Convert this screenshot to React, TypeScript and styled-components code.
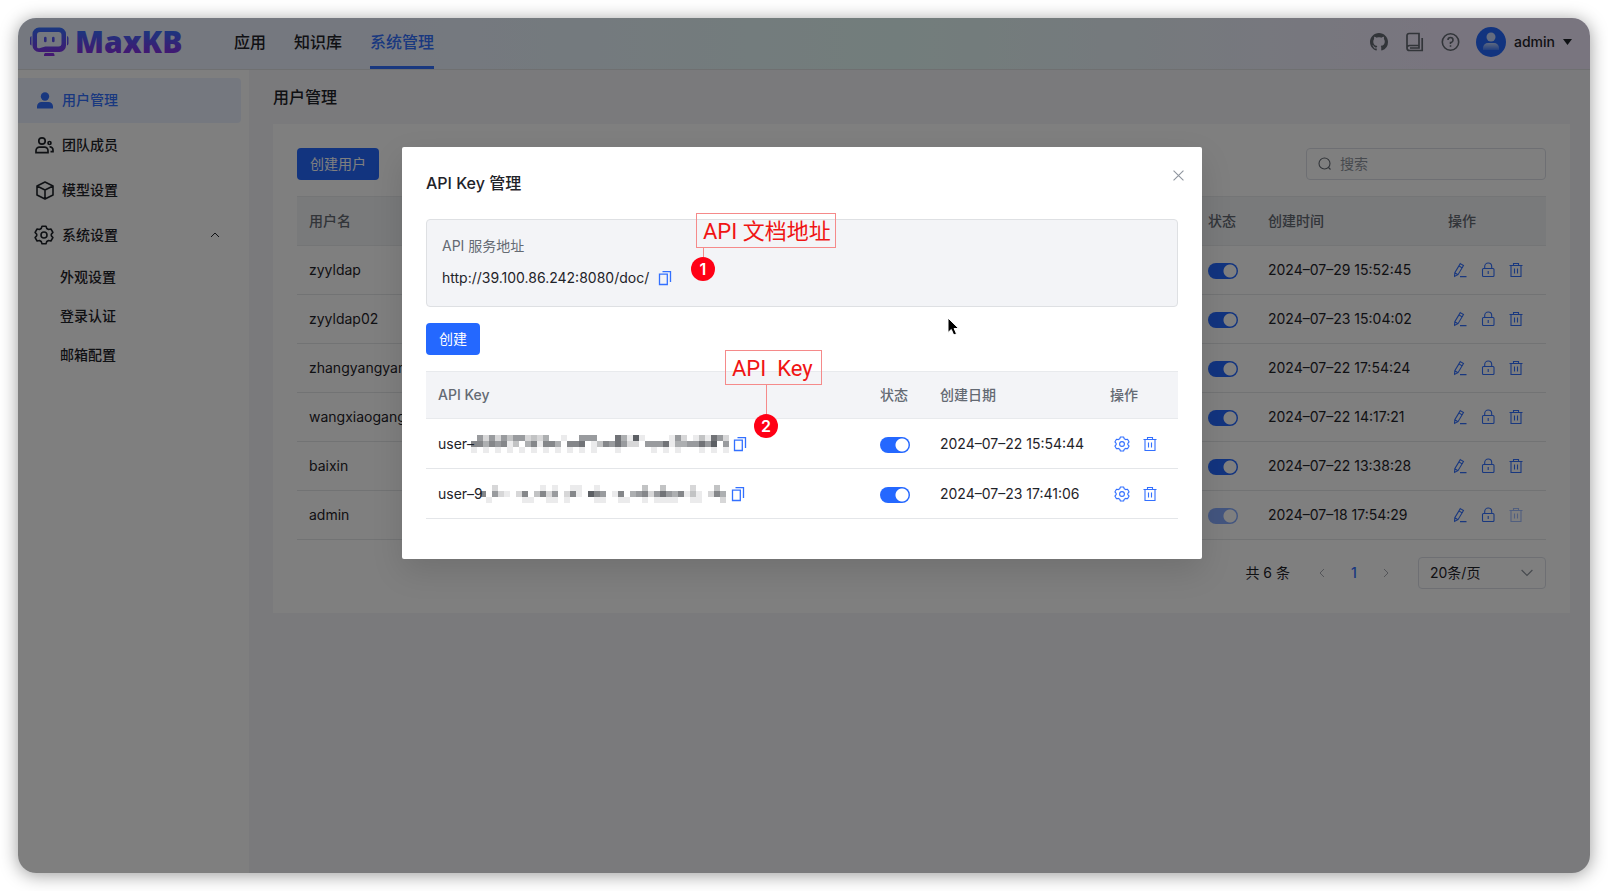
import React from 'react';
import styled, { createGlobalStyle, css } from 'styled-components';

const Global = createGlobalStyle`
  *, *::before, *::after { box-sizing: border-box; }
  body { margin: 0; background: #fff; }
  body, button, input, select {
    font-family: Inter, 'Noto Sans CJK SC', sans-serif;
    font-size: 14px;
    line-height: 22px;
    color: #1f2329;
  }
  button { padding: 0; border: 0; background: none; cursor: pointer; }
  h1, h2, p { margin: 0; }
  a { color: inherit; text-decoration: none; }
  svg { display: block; flex: none; }
`;

const Page = styled.div`
  min-height: 100vh;
  padding: 18px;
  display: flex;
`;

const Frame = styled.div`
  position: relative;
  flex: 1;
  display: flex;
  flex-direction: column;
  border-radius: 18px;
  overflow: hidden;
  background: #f4f5f8;
  box-shadow: 0 2px 18px rgba(0, 0, 0, 0.4);
`;

const Header = styled.header`
  display: flex;
  align-items: center;
  height: 52px;
  padding: 0 18px 0 12px;
  border-bottom: 1px solid #dee0e3;
  background: linear-gradient(90deg, #ebf1ff 24%, #e5fbf8 56%, #f2ebfe 90%);
`;

const Brand = styled.a`
  display: flex;
  width: 204px;
`;

const Nav = styled.nav`
  flex: 1;
  align-self: stretch;
  display: flex;
  gap: 28px;
`;

const NavLink = styled.a<{ $active?: boolean }>`
  display: flex;
  align-items: center;
  font-size: 16px;
  font-weight: 500;
  border-bottom: 3px solid transparent;
  ${(p) => p.$active && css`
    color: #3370ff;
    border-color: #3370ff;
  `}
`;

const HeaderTools = styled.div`
  display: flex;
  align-items: center;
  gap: 16px;
  margin-bottom: 4px;
  color: #646a73;
`;

const IconButton = styled.button`
  display: inline-flex;
  align-items: center;
  justify-content: center;
  color: inherit;
`;

const UserMenu = styled.button`
  display: flex;
  align-items: center;
  gap: 8px;
  font-weight: 500;
`;

const Body = styled.div`
  flex: 1;
  display: flex;
`;

const Sidebar = styled.aside`
  width: 231px;
  padding: 8px 8px 0 0;
  background: #fff;
`;

const SideLink = styled.a<{ $active?: boolean }>`
  display: flex;
  align-items: center;
  gap: 8px;
  height: 45px;
  padding: 0 21px 2px 16px;
  border-radius: 0 4px 4px 0;
  font-weight: 500;
  ${(p) => p.$active && css`
    color: #3370ff;
    background: #ebf1ff;
  `}
  & > span { flex: 1; }
`;

const SubLink = styled.a`
  display: flex;
  align-items: center;
  height: 39px;
  padding: 0 0 2px 42px;
  font-weight: 500;
`;

const Main = styled.main`
  flex: 1;
  padding: 15px 20px 0 24px;
`;

const PageTitle = styled.h1`
  font-size: 16px;
  line-height: 24px;
  font-weight: 500;
`;

const Card = styled.section`
  margin-top: 15px;
  padding: 24px;
  background: #fff;
`;

const Toolbar = styled.div`
  display: flex;
  justify-content: space-between;
  margin-bottom: 16px;
`;

const PrimaryButton = styled.button`
  height: 32px;
  padding: 0 13px 1px;
  border-radius: 4px;
  background: #2468ff;
  color: #fff;
`;

const SearchBox = styled.label`
  display: flex;
  align-items: center;
  gap: 8px;
  width: 240px;
  height: 32px;
  padding: 0 11px;
  border: 1px solid #dcdfe6;
  border-radius: 4px;
  color: #646a73;
  input {
    flex: 1;
    min-width: 0;
    border: 0;
    padding: 0;
    outline: 0;
    background: none;
  }
  input::placeholder { color: #8f959e; opacity: 1; }
`;

const Table = styled.table<{ $head: number; $row: number }>`
  width: 100%;
  border-collapse: separate;
  border-spacing: 0;
  table-layout: fixed;
  th {
    height: ${(p) => p.$head}px;
    padding: 0 12px 1px;
    text-align: left;
    font-weight: 500;
    color: #646a73;
    background: #f3f4f7;
    border-top: 1px solid #e8eaed;
    border-bottom: 1px solid #e8eaed;
  }
  td {
    height: ${(p) => p.$row}px;
    padding: 0 12px;
    border-bottom: 1px solid #e4e6e9;
    white-space: nowrap;
  }
`;

const Col = styled.col<{ $w?: number }>`
  width: ${(p) => (p.$w ? `${p.$w}px` : 'auto')};
`;

const Switch = styled.input`
  appearance: none;
  display: block;
  width: 30px;
  height: 16px;
  margin: 2px 0 0;
  border-radius: 8px;
  background: radial-gradient(circle at 22px 8px, #fff 6px, transparent 7px) #2468ff;
  &:disabled { opacity: 0.55; }
`;

const Actions = styled.div`
  display: flex;
  gap: 12px;
  padding-left: 4px;
  color: #3370ff;
  button:disabled { opacity: 0.45; }
`;

const Pager = styled.div`
  display: flex;
  align-items: center;
  justify-content: flex-end;
  margin-top: 17px;
`;

const Total = styled.span`
  margin-right: 16px;
`;

const PageButton = styled.button<{ $current?: boolean }>`
  display: flex;
  align-items: center;
  justify-content: center;
  width: 32px;
  height: 32px;
  font-weight: 500;
  color: ${(p) => (p.$current ? '#3370ff' : '#a8abb2')};
`;

const SizeBox = styled.div`
  display: flex;
  align-items: center;
  width: 128px;
  height: 32px;
  margin-left: 16px;
  padding-right: 12px;
  border: 1px solid #dcdfe6;
  border-radius: 4px;
  color: #8f959e;
  select {
    flex: 1;
    appearance: none;
    border: 0;
    padding: 0 0 0 11px;
    background: none;
  }
`;

const Overlay = styled.div`
  position: absolute;
  inset: 0;
  display: flex;
  justify-content: center;
  align-items: flex-start;
  padding: 129px 4px 0 0;
  background: rgba(0, 0, 0, 0.5);
`;

const Dialog = styled.section`
  position: relative;
  width: 800px;
  padding: 24px 24px 40px;
  border-radius: 2px;
  background: #fff;
  box-shadow: 0 12px 32px rgba(0, 0, 0, 0.12);
`;

const DialogHead = styled.div`
  display: flex;
  justify-content: space-between;
  h2 { font-size: 16px; line-height: 24px; font-weight: 500; }
`;

const CloseButton = styled(IconButton)`
  width: 16px;
  height: 16px;
  margin: -4px -8px 0 0;
  color: #8f959e;
`;

const AddressBox = styled.div`
  margin: 24px 0 16px;
  padding: 15px;
  height: 88px;
  border: 1px solid #dee0e3;
  border-radius: 4px;
  background: #f3f4f7;
`;

const AddressLabel = styled.p`
  color: #646a73;
  margin-bottom: 10px;
`;

const Inline = styled.div<{ $gap: number }>`
  display: flex;
  align-items: center;
  gap: ${(p) => p.$gap}px;
  color: #1f2329;
  button { color: #3370ff; }
`;

const KeyTable = styled(Table)`
  margin-top: 16px;
`;

const Note = styled.div<{ $x: number; $y: number; $w: number }>`
  position: absolute;
  left: ${(p) => p.$x}px;
  top: ${(p) => p.$y}px;
  width: ${(p) => p.$w}px;
  height: 35px;
  padding-left: 6px;
  border: 1px solid #f58a8a;
  font-family: Roboto, 'Noto Sans CJK SC', sans-serif;
  font-size: 22px;
  line-height: 35px;
  color: #f01414;
  white-space: pre;
`;

const Marker = styled.div<{ $x: number; $y: number; $stem: number }>`
  position: absolute;
  left: ${(p) => p.$x}px;
  top: ${(p) => p.$y}px;
  width: 24px;
  height: 24px;
  border-radius: 12px;
  background: #ff0015;
  color: #fff;
  font-size: 16px;
  font-weight: 600;
  line-height: 24px;
  text-align: center;
  &::before {
    content: '';
    position: absolute;
    left: 12px;
    bottom: 24px;
    height: ${(p) => p.$stem}px;
    border-left: 1px solid #f58a8a;
  }
`;

const Pointer = styled.svg`
  position: absolute;
  left: 545px;
  top: 170px;
`;

const MosaicSvg = styled.svg`
  margin-left: -3px;
`;

const Logo = () => (
  <svg width="164" height="46" viewBox="0 0 164 46" role="img" aria-label="MaxKB">
    <defs>
      <linearGradient id="brand" x1="0" y1="0" x2="0" y2="1">
        <stop offset="0" stopColor="#3370ff" />
        <stop offset="1" stopColor="#8a2be2" />
      </linearGradient>
      <linearGradient id="brandText" gradientUnits="userSpaceOnUse" x1="0" y1="8" x2="0" y2="34">
        <stop offset="0" stopColor="#3370ff" />
        <stop offset="1" stopColor="#8a2be2" />
      </linearGradient>
    </defs>
    <g transform="translate(0 5)">
      <path fill="url(#brand)" fillRule="evenodd" d="M9 1.500h20.500a6.500 6.500 0 0 1 6.500 6.500v11.500a6.500 6.500 0 0 1-6.500 6.500H9a6.500 6.500 0 0 1-6.500-6.500V8a6.500 6.500 0 0 1 6.500-6.500ZM10 6a3 3 0 0 0-3 3v11.500a1.800 1.800 0 0 0 2.300 1.700l6-1.700H28.500a3 3 0 0 0 3-3V9a3 3 0 0 0-3-3ZM0 12a2 2 0 0 1 1.500-2v9.500a2 2 0 0 1-1.500-2ZM37 10a2 2 0 0 1 1.500 2v5.500a2 2 0 0 1-1.500 2ZM15 27h8.500a3.500 3.500 0 0 1 1 3H14a3.500 3.500 0 0 1 1-3ZM14 12a1.300 1.300 0 0 1 2.600 0v3a1.300 1.300 0 0 1-2.600 0ZM22 12a1.300 1.300 0 0 1 2.600 0v3a1.300 1.300 0 0 1-2.600 0Z" />
    </g>
    <text x="45" y="32" fill="url(#brandText)" fontFamily="'Open Sans', sans-serif" fontWeight="800" fontSize="30">MaxKB</text>
  </svg>
);

const Github = () => (
  <svg width="18" height="18" viewBox="0 0 16 16" fill="currentColor">
    <path d="M8 0C3.580 0 0 3.580 0 8c0 3.540 2.290 6.530 5.470 7.590.4.070.55-.17.55-.38 0-.19-.01-.82-.01-1.490-2.010.37-2.530-.49-2.690-.94-.09-.23-.48-.94-.82-1.130-.28-.15-.68-.52-.01-.53.63-.01 1.080.58 1.230.82.72 1.210 1.870.87 2.330.66.070-.52.28-.87.51-1.070-1.780-.2-3.640-.89-3.640-3.950 0-.87.31-1.590.82-2.150-.08-.2-.36-1.020.08-2.120 0 0 .67-.21 2.200.82.64-.18 1.320-.27 2-.27s1.360.09 2 .27c1.530-1.040 2.200-.82 2.200-.82.44 1.100.16 1.920.08 2.120.51.56.82 1.270.82 2.150 0 3.070-1.870 3.750-3.650 3.950.29.25.54.73.54 1.480 0 1.070-.01 1.930-.01 2.200 0 .21.15.46.55.38A8.010 8.010 0 0 0 16 8c0-4.420-3.580-8-8-8Z" />
  </svg>
);

const Book = () => (
  <svg width="20" height="20" viewBox="0 0 20 20" fill="none" stroke="currentColor" strokeWidth="1.7">
    <path d="M15 13.500V1.500H5A2 2 0 0 0 3 3.500V16a2.500 2.500 0 0 0 2.500 2.500H18.200V6M3 16a2.500 2.500 0 0 1 2.500-2.500H15M6 16H15V13.500" />
  </svg>
);

const Help = () => (
  <svg width="20" height="20" viewBox="0 0 20 20" fill="none" stroke="currentColor" strokeWidth="1.6">
    <circle cx="10.500" cy="10" r="8.200" />
    <path d="M8 8A2.500 2.500 0 1 1 10.500 10.500V12M10.500 13.200v1.600" />
  </svg>
);

const Avatar = () => (
  <svg width="30" height="30" viewBox="0 0 30 30">
    <defs>
      <linearGradient id="bust" x1="0" y1="0" x2="0" y2="1">
        <stop offset="0" stopColor="#fff" stopOpacity="0.7" />
        <stop offset="1" stopColor="#fff" stopOpacity="0.15" />
      </linearGradient>
    </defs>
    <circle cx="15" cy="15" r="15" fill="#2468ff" />
    <circle cx="15" cy="10" r="4.500" fill="#fff" fillOpacity="0.75" />
    <path fill="url(#bust)" d="M7 23v-2a5 5 0 0 1 5-5h6a5 5 0 0 1 5 5v2Z" />
  </svg>
);

const Person = () => (
  <svg width="20" height="20" viewBox="0 0 20 20" fill="currentColor">
    <circle cx="11" cy="6.500" r="4.200" />
    <path d="M3 18.500v-2a4.500 4.500 0 0 1 4.500-4.500h7A4.500 4.500 0 0 1 19 16.500v2Z" />
  </svg>
);

const Team = () => (
  <svg width="20" height="20" viewBox="0 0 20 20" fill="none" stroke="currentColor" strokeWidth="1.700">
    <circle cx="8" cy="6" r="3.200" />
    <path d="M2 17.700v-2a3.500 3.500 0 0 1 3.500-3.500h5a3.500 3.500 0 0 1 3.500 3.500v2Z" />
    <circle cx="15.500" cy="8" r="1.500" />
    <path d="M15.500 12a3 3 0 0 1 3.500 3v1.700h-2.500" />
  </svg>
);

const Cube = () => (
  <svg width="20" height="20" viewBox="0 0 20 20" fill="none" stroke="currentColor" strokeWidth="1.600" strokeLinejoin="round">
    <path d="M11 2l8 4v9l-8 4-8-4V6ZM3 6l8 4 8-4M11 10v9" />
  </svg>
);

const gearPath =
  'M8 1.200h4l.8 2.300 1.700 1 2.400-.5 2 3.400-1.600 1.800v1.600l1.600 1.800-2 3.400-2.400-.5-1.700 1-.8 2.300H8l-.8-2.300-1.700-1-2.400.5-2-3.400 1.600-1.800V9.200L1.100 7.400l2-3.400 2.400.5 1.700-1Z';

const Gear = ({ size, stroke }: { size: number; stroke: number }) => (
  <svg width={size} height={size} viewBox="0 0 20 20" fill="none" stroke="currentColor" strokeWidth={stroke} strokeLinejoin="round">
    <path d={gearPath} />
    <circle cx="10" cy="10" r="3" />
  </svg>
);

const Chevron = ({ d, size = 10 }: { d: string; size?: number }) => (
  <svg width={size} height={size} viewBox="0 0 10 10" fill="none" stroke="currentColor">
    <path d={d} />
  </svg>
);

const Search = () => (
  <svg width="14" height="14" viewBox="0 0 14 14" fill="none" stroke="currentColor" strokeWidth="1.100">
    <circle cx="6.500" cy="6.500" r="5.500" />
    <path d="M10.500 10.500l2 2" />
  </svg>
);

const Pencil = () => (
  <svg width="16" height="16" viewBox="0 0 16 16" fill="none" stroke="currentColor" strokeWidth="1.100">
    <path d="M8.300 1.600l3.200 1.900-5.500 9.200-3.400 1.700.2-3.700ZM7 4l3.200 1.900M2.800 10.700l3.200 2M8 14.600h6.500" />
  </svg>
);

const Lock = () => (
  <svg width="16" height="16" viewBox="0 0 16 16" fill="none" stroke="currentColor" strokeWidth="1.100">
    <rect x="2.500" y="6.500" width="11.500" height="8" rx="1" />
    <path d="M4.700 6.500V4.500a3.500 3.500 0 0 1 7 0v2M8.200 9v3" />
  </svg>
);

const Trash = () => (
  <svg width="16" height="16" viewBox="0 0 16 16" fill="none" stroke="currentColor" strokeWidth="1.100">
    <path d="M1.500 3.500h13M5.500 3.500v-2h5v2M3 3.500v11h10v-11M6.500 6.500v5M9.500 6.500v5" />
  </svg>
);

const Copy = () => (
  <svg width="14" height="16" viewBox="0 0 14 16" fill="none" stroke="currentColor" strokeWidth="1.300">
    <path d="M1.500 4.200h7.800v10.300h-7.800ZM4.500 1.700h8V12" />
  </svg>
);

const Mosaic = ({ rows }: { rows: string[] }) => {
  const width = rows[1].length * 6;
  return (
    <MosaicSvg width={width} height="18" viewBox={`0 0 ${width} 18`} shapeRendering="crispEdges">
      {rows.map((row, y) =>
        [...row].map((level, x) => (
          <rect key={`${x}-${y}`} x={x * 6} y={y * 6} width="6" height="6" fill="#1f2329" fillOpacity={Number(level) / 11} />
        )),
      )}
    </MosaicSvg>
  );
};

const users = [
  ['zyyldap', '2024–07–29 15:52:45'],
  ['zyyldap02', '2024–07–23 15:04:02'],
  ['zhangyangyang', '2024–07–22 17:54:24'],
  ['wangxiaogang', '2024–07–22 14:17:21'],
  ['baixin', '2024–07–22 13:38:28'],
  ['admin', '2024–07–18 17:54:29'],
];

const keys = [
  {
    prefix: 'user–',
    date: '2024–07–22 15:54:44',
    gap: 4,
    rows: [
      '0525253552324001005550007418100001520131752',
      '6646561304616640667013657522055571445575805',
      '1010101010101010101010001000001010100010101',
    ],
  },
  {
    prefix: 'user–9',
    date: '2024–07–23 17:41:06',
    gap: 5,
    rows: [
      '00200000001010011001000000030030000200030',
      '60521026036250261086501604562575461310264',
      '01000001100110100001100110010111100110002',
    ],
  },
];

export default function App() {
  return (
    <Page>
      <Global />
      <Frame>
        <Header>
          <Brand href="#"><Logo /></Brand>
          <Nav>
            <NavLink href="#">应用</NavLink>
            <NavLink href="#">知识库</NavLink>
            <NavLink href="#" $active>系统管理</NavLink>
          </Nav>
          <HeaderTools>
            <IconButton aria-label="GitHub"><Github /></IconButton>
            <IconButton aria-label="文档"><Book /></IconButton>
            <IconButton aria-label="帮助"><Help /></IconButton>
            <UserMenu>
              <Avatar />
              admin
              <svg width="9" height="6" viewBox="0 0 9 6" fill="currentColor"><path d="M0 0h9L4.500 6Z" /></svg>
            </UserMenu>
          </HeaderTools>
        </Header>
        <Body>
          <Sidebar>
            <SideLink href="#" $active><Person /><span>用户管理</span></SideLink>
            <SideLink href="#"><Team /><span>团队成员</span></SideLink>
            <SideLink href="#"><Cube /><span>模型设置</span></SideLink>
            <SideLink href="#">
              <Gear size={20} stroke={1.6} />
              <span>系统设置</span>
              <Chevron d="M1 7l4-4 4 4" />
            </SideLink>
            <SubLink href="#">外观设置</SubLink>
            <SubLink href="#">登录认证</SubLink>
            <SubLink href="#">邮箱配置</SubLink>
          </Sidebar>
          <Main>
            <PageTitle>用户管理</PageTitle>
            <Card>
              <Toolbar>
                <PrimaryButton>创建用户</PrimaryButton>
                <SearchBox>
                  <Search />
                  <input type="text" placeholder="搜索" aria-label="搜索" />
                </SearchBox>
              </Toolbar>
              <Table $head={50} $row={49}>
                <colgroup>
                  <Col />
                  <Col $w={60} />
                  <Col $w={180} />
                  <Col $w={110} />
                </colgroup>
                <thead>
                  <tr><th>用户名</th><th>状态</th><th>创建时间</th><th>操作</th></tr>
                </thead>
                <tbody>
                  {users.map(([name, date]) => (
                    <tr key={name}>
                      <td>{name}</td>
                      <td><Switch type="checkbox" defaultChecked disabled={name === 'admin'} aria-label={`${name} 状态`} /></td>
                      <td>{date}</td>
                      <td>
                        <Actions>
                          <IconButton aria-label="编辑"><Pencil /></IconButton>
                          <IconButton aria-label="修改密码"><Lock /></IconButton>
                          <IconButton aria-label="删除" disabled={name === 'admin'}><Trash /></IconButton>
                        </Actions>
                      </td>
                    </tr>
                  ))}
                </tbody>
              </Table>
              <Pager>
                <Total>共 6 条</Total>
                <PageButton aria-label="上一页"><Chevron d="M7 1L3 5l4 4" /></PageButton>
                <PageButton $current>1</PageButton>
                <PageButton aria-label="下一页"><Chevron d="M3 1l4 4-4 4" /></PageButton>
                <SizeBox>
                  <select aria-label="每页条数"><option>20条/页</option></select>
                  <Chevron d="M0.500 2.500L5 7l4.500-4.500" size={12} />
                </SizeBox>
              </Pager>
            </Card>
          </Main>
        </Body>
        <Overlay>
          <Dialog role="dialog" aria-labelledby="dialog-title">
            <DialogHead>
              <h2 id="dialog-title">API Key 管理</h2>
              <CloseButton aria-label="关闭"><Chevron d="M0.500 0.500l9 9M9.500 0.500l-9 9" size={11} /></CloseButton>
            </DialogHead>
            <AddressBox>
              <AddressLabel>API 服务地址</AddressLabel>
              <Inline $gap={9}>
                http://39.100.86.242:8080/doc/
                <IconButton aria-label="复制地址"><Copy /></IconButton>
              </Inline>
            </AddressBox>
            <PrimaryButton>创建</PrimaryButton>
            <KeyTable $head={48} $row={50}>
              <colgroup>
                <Col />
                <Col $w={60} />
                <Col $w={170} />
                <Col $w={80} />
              </colgroup>
              <thead>
                <tr><th>API Key</th><th>状态</th><th>创建日期</th><th>操作</th></tr>
              </thead>
              <tbody>
                {keys.map((k) => (
                  <tr key={k.date}>
                    <td>
                      <Inline $gap={k.gap}>
                        <Inline $gap={0}>
                          {k.prefix}
                          <Mosaic rows={k.rows} />
                        </Inline>
                        <IconButton aria-label="复制"><Copy /></IconButton>
                      </Inline>
                    </td>
                    <td><Switch type="checkbox" defaultChecked aria-label="状态" /></td>
                    <td>{k.date}</td>
                    <td>
                      <Actions>
                        <IconButton aria-label="设置"><Gear size={16} stroke={1.4} /></IconButton>
                        <IconButton aria-label="删除"><Trash /></IconButton>
                      </Actions>
                    </td>
                  </tr>
                ))}
              </tbody>
            </KeyTable>
            <Note $x={294} $y={66} $w={140}>API 文档地址</Note>
            <Marker $x={289} $y={110} $stem={9}>1</Marker>
            <Note $x={323} $y={203} $w={97}>{'API  Key'}</Note>
            <Marker $x={352} $y={267} $stem={29}>2</Marker>
            <Pointer width="14" height="20" viewBox="0 0 14 20">
              <path d="M1 1v14.500l3.300-3 2.400 5.500 2.800-1.200-2.400-5.300h4.600Z" fill="#000" stroke="#fff" />
            </Pointer>
          </Dialog>
        </Overlay>
      </Frame>
    </Page>
  );
}
